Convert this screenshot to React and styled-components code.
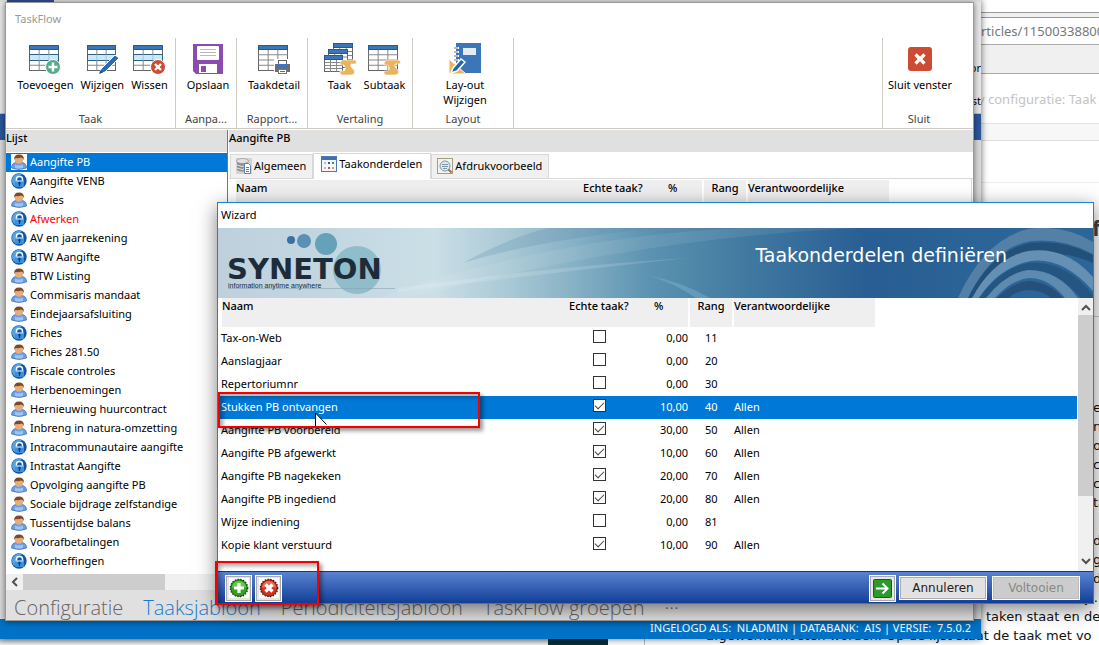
import React from "react";
import styled, { createGlobalStyle, css } from "styled-components";

const ui = `"Noto Sans", "Open Sans", sans-serif`;
const wide = `"DejaVu Sans", Verdana, sans-serif`;

const GlobalStyle = createGlobalStyle`
  * { box-sizing: border-box; }
  body { margin: 0; background: #fff; font: 11px/16px ${ui}; color: #000; }
  button { font: inherit; color: inherit; margin: 0; padding: 0; border: 0; background: none; }
  ul { list-style: none; margin: 0; padding: 0; }
  svg { display: block; flex: none; }
`;

const Desktop = styled.div`
  position: relative;
  height: 100vh;
  min-height: 640px;
  overflow: hidden;
  background: #fff;
`;

/* ---------- browser and document behind the windows ---------- */

const Browser = styled.div`
  position: absolute;
  inset: 0 0 0 auto;
  width: 118px;
  display: flex;
  flex-direction: column;
  overflow: hidden;
  white-space: nowrap;
  font-size: 13px;
  color: #777;
`;
const BrowserStrip = styled.div`
  flex: none;
  height: ${(p) => p.$h}px;
  line-height: ${(p) => p.$h}px;
  background: ${(p) => p.$bg || "#fff"};
  color: ${(p) => p.$color || "#777"};
  border-bottom: 1px solid ${(p) => p.$line || "#e3e3e3"};
  text-indent: ${(p) => p.$indent || 0}px;
`;
const Heading = styled.div`
  font: bold 22px/28px ${ui};
  color: #444;
  padding: 30px 0 0 111px;
  height: 134px;
  border-bottom: 1px solid #ccc;
`;

const Document = styled.div`
  position: absolute;
  right: 0;
  bottom: 0;
  left: 644px;
  border-left: 1px solid #bbb;
  font: 13px/19px ${wide};
  color: #111;
  white-space: nowrap;
  overflow: hidden;
`;
const DocLine = styled.div`
  height: 19px;
  padding-left: ${(p) => p.$indent}px;
`;
const DarkBlock = styled.div`
  position: absolute;
  left: 548px;
  bottom: 0;
  width: 60px;
  height: 6px;
  background: #04303a;
`;
const GreyStrip = styled.div`
  position: absolute;
  left: 0;
  bottom: 0;
  width: 548px;
  height: 6px;
  background: linear-gradient(#bdbdbd, #f2f2f2);
`;

/* ---------- the host application ---------- */

const Shell = styled.div`
  position: absolute;
  inset: 0 118px 6px 0;
  display: flex;
  flex-direction: column;
  background: #dcdcdc;
  box-shadow: 0 0 7px rgba(0, 0, 0, 0.6);
  overflow: hidden;
  clip-path: inset(0 -9px -6px 0);
`;
const ShellTab = styled.div`
  width: 47px;
  height: 2px;
  margin-left: 7px;
  background: #2b4f8f;
`;
const ShellTop = styled.div`
  height: 112px;
  background: #e6e6e6;
  border-bottom: 1px solid #bbb;
  text-align: right;
  line-height: 33px;
  padding-top: 49px;
`;
const ShellBand = styled.div`
  height: 26px;
  background: #2a5699;
`;
const ShellFill = styled.div`
  flex: 1;
  background: #d8d8d8;
`;
const StatusBar = styled.footer`
  height: 20px;
  flex: none;
  background: #0072c6;
  color: #fff;
  text-align: right;
  padding-right: 10px;
  line-height: 18px;
  white-space: pre;
`;

/* ---------- main window ---------- */

const MainWindow = styled.section`
  position: absolute;
  inset: 2px 125px 24px 5px;
  display: flex;
  flex-direction: column;
  background: #fff;
  border: 1px solid #9a9a9a;
  box-shadow: 0 1px 6px rgba(0, 0, 0, 0.5);
  overflow: hidden;
`;
const TitleBar = styled.header`
  flex: none;
  height: 35px;
  line-height: 32px;
  padding-left: 9px;
  color: #999;
`;
const Ribbon = styled.nav`
  flex: none;
  display: flex;
  height: 91px;
  border-bottom: 1px solid #cfcbc4;
  margin-bottom: 1px;
`;
const Group = styled.div`
  flex: none;
  width: ${(p) => p.$w}px;
  display: flex;
  flex-direction: column;
  justify-content: space-between;
  border-right: 1px solid #cfcbc4;
  ${(p) =>
    p.$last &&
    css`
      margin-left: auto;
      padding-right: 18px;
      border-right: 0;
      border-left: 1px solid #cfcbc4;
    `}
`;
const GroupItems = styled.div`
  display: flex;
  justify-content: center;
  gap: ${(p) => p.$gap || 7}px;
  padding: 5px 0 0 ${(p) => p.$shift || 0}px;
`;
const GroupLabel = styled.div`
  text-align: center;
  color: #444;
  padding-bottom: 1px;
`;
const ToolButton = styled.button`
  display: flex;
  flex-direction: column;
  align-items: center;
  gap: 2px;
  line-height: 15px;
  white-space: pre;
`;
const Body = styled.div`
  flex: 1;
  display: flex;
  min-height: 0;
`;
const Side = styled.aside`
  width: 222px;
  flex: none;
  display: flex;
  flex-direction: column;
  border-right: 1px solid #777;
`;
const PaneTitle = styled.h2`
  flex: none;
  margin: 0;
  height: 22px;
  line-height: 16px;
  font-size: 11px;
  font-weight: 500;
  background: #e0e0e0;
`;
const TaskList = styled.ul`
  flex: 1;
  padding-top: 1px;
  min-height: 0;
  overflow: hidden;
`;
const TaskItem = styled.li`
  display: flex;
  align-items: center;
  gap: 3px;
  height: 19px;
  padding: 0 0 2px 5px;
  white-space: nowrap;
  color: ${(p) => (p.$selected ? "#fff" : p.$alert ? "#f00" : "#000")};
  background: ${(p) => (p.$selected ? "#0078d7" : "transparent")};
`;
const HScroll = styled.div`
  flex: none;
  display: flex;
  align-items: center;
  height: 16px;
  background: #f0f0f0;
`;
const HThumb = styled.div`
  width: 142px;
  height: 16px;
  margin-left: 1px;
  background: #cdcdcd;
`;
const Main = styled.main`
  flex: 1;
  min-width: 0;
  display: flex;
  flex-direction: column;
  border-left: 1px solid #fff;
`;
const Tabs = styled.div`
  flex: none;
  display: flex;
  align-items: flex-end;
  height: 27px;
  padding-left: 1px;
  border-bottom: 1px solid #d9d9d9;
`;
const Tab = styled.button`
  display: flex;
  align-items: center;
  gap: 2px;
  height: ${(p) => (p.$active ? 26 : 24)}px;
  padding: ${(p) => (p.$active ? "0 8px 6px 7px" : "0 6px 2px 5px")};
  background: ${(p) => (p.$active ? "#fff" : "#f0f0f0")};
  border: 1px solid #d9d9d9;
  border-bottom: 0;
  ${(p) => p.$active && css`margin-bottom: -1px;`}
`;
const TabPage = styled.div`
  flex: 1;
  padding: 1px 0 0 3px;
  margin-right: 1px;
  border-right: 1px solid #d9d9d9;
`;
const BottomTabs = styled.div`
  flex: none;
  display: flex;
  align-items: center;
  gap: 20px;
  height: 30px;
  padding: 5px 0 0 8px;
  background: #e0e0e0;
`;
const BottomTab = styled.button`
  font-family: "Open Sans", ${ui};
  font-size: 20px;
  line-height: 26px;
  font-weight: 300;
  white-space: nowrap;
  color: ${(p) => (p.$active ? "#1979ca" : "#666")};
`;

/* ---------- parts table ---------- */

const PartsTable = styled.table`
  width: 100%;
  table-layout: fixed;
  border-collapse: separate;
  border-spacing: 0;
  th, td { padding: 0; font-weight: inherit; text-align: left; white-space: nowrap; }
  tbody td { padding-bottom: 2px; }
`;
const Col = styled.col`
  width: ${(p) => (p.$w ? p.$w + "px" : "auto")};
`;
const HeadCell = styled.th`
  height: 29px;
  vertical-align: top;
  font-weight: 500 !important;
  background: #efefef;
  ${(p) => p.$first && css`border-left: 4px solid #fff;`}
  ${(p) => p.$check && css`padding-left: 1px !important;`}
  ${(p) => p.$pct && css`padding-left: 23px !important;`}
  ${(p) => p.$boxed && css`border: solid #fff; border-width: 0 2px; text-align: center !important;`}
  ${(p) => p.$blank && css`background: transparent;`}
`;
const Row = styled.tr`
  height: 23px;
  color: ${(p) => (p.$selected ? "#fff" : "#000")};
  background: ${(p) => (p.$selected ? "#0078d7" : "transparent")};
`;
const NameCell = styled.td`
  padding-left: 3px !important;
`;
const CheckCell = styled.td`
  text-align: center !important;
  padding-bottom: 4px !important;
`;
const NumCell = styled.td`
  text-align: right !important;
`;
const RankCell = styled.td`
  padding-left: 17px !important;
`;
const Check = styled.input`
  appearance: none;
  display: block;
  width: 13px;
  height: 13px;
  margin: 0 auto;
  background: #fff;
  border: 1px solid #333;
  &:checked::after {
    content: "";
    display: block;
    width: 8px;
    height: 4px;
    margin: 2px 0 0 1px;
    border: solid #444;
    border-width: 0 0 1px 1px;
    transform: rotate(-45deg);
  }
`;

/* ---------- wizard ---------- */

const Wizard = styled.section`
  position: absolute;
  inset: 202px 5px 41px 217px;
  display: flex;
  flex-direction: column;
  background: #fff;
  border: 1px solid #1883d7;
  box-shadow: 0 5px 18px rgba(0, 0, 0, 0.5);
`;
const WizardTitle = styled.header`
  flex: none;
  height: 25px;
  line-height: 23px;
  padding-left: 3px;
`;
const Banner = styled.div`
  flex: none;
  position: relative;
  height: 70px;
  overflow: hidden;
  display: flex;
  justify-content: space-between;
  background: linear-gradient(90deg, #bed0dc 0, #c3d8e1 130px, #cbdfe7 215px, #a9c9d5 290px, #8ab3c7 350px, #5c93b1 430px, #4079a0 530px, #285e93 650px, #2d6a9b 100%);
`;
const BannerArt = styled.svg`
  position: absolute;
  inset: 0;
  width: 100%;
  height: 70px;
`;
const Logo = styled.div`
  position: relative;
  padding: 27px 0 0 9px;
  color: #1d2c38;
`;
const LogoName = styled.div`
  font: bold 29px/28px ${wide};
`;
const LogoLine = styled.div`
  font: 7px/5px "Liberation Sans", sans-serif;
  padding-left: 1px;
`;
const BannerTitle = styled.h1`
  position: relative;
  margin: 0;
  padding: 14px 86px 0 0;
  font: 19px/26px ${wide};
  color: #fff;
`;
const WizardBody = styled.div`
  flex: 1;
  min-height: 0;
  display: flex;
  gap: 1px;
`;
const TableArea = styled.div`
  flex: 1;
  min-width: 0;
  overflow: hidden;
`;
const VScroll = styled.div`
  flex: none;
  width: 15px;
  display: flex;
  flex-direction: column;
  align-items: center;
  background: #f0f0f0;
  padding: 4px 0;
`;
const VThumb = styled.div`
  width: 15px;
  height: 181px;
  margin: 4px 0 auto;
  background: #cdcdcd;
`;
const WizardFooter = styled.footer`
  flex: none;
  height: 32px;
  display: flex;
  align-items: center;
  gap: 3px;
  padding: 1px 13px 0 7px;
  border-top: 1px solid #0b3a93;
  background: linear-gradient(#5883d1, #123e97);
`;
const IconButton = styled.button`
  width: 27px;
  height: 27px;
  display: grid;
  place-items: center;
  background: #e6e6e6;
  border: 1px solid #fff;
  box-shadow: inset 0 0 0 1px #aaa;
  ${(p) => p.$push && css`margin-left: auto;`}
`;
const TextButton = styled.button`
  width: 88px;
  height: 24px;
  font: 12px/20px ${wide};
  background: ${(p) => (p.disabled ? "#ccc" : "#e1e1e1")};
  color: ${(p) => (p.disabled ? "#888" : "#222")};
  border: 1px solid #fff;
  box-shadow: inset 0 0 0 1px ${(p) => (p.disabled ? "#bbb" : "#adadad")};
  & + & { margin-left: 2px; }
`;

/* ---------- highlight frames and mouse pointer ---------- */

const Marker = styled.div`
  position: absolute;
  left: ${(p) => p.$x}px;
  top: ${(p) => p.$y}px;
  width: ${(p) => p.$w}px;
  height: ${(p) => p.$h}px;
  border: 2px solid #f40000;
  box-shadow: 3px 3px 4px rgba(0, 0, 0, 0.4), inset 3px 3px 4px rgba(0, 0, 0, 0.35);
  pointer-events: none;
`;
const Pointer = styled.svg`
  position: absolute;
  left: 314px;
  top: 412px;
`;

/* ---------- icons ---------- */

function Grid({ x = 1, y = 2, w = 30, h = 26, stripe }) {
  const c = w / 3;
  return (
    <g>
      <rect x={x} y={y} width={w} height={h} fill="#fff" stroke="#666" />
      {[1, 2, 3].map((i) => (
        <path key={i} d={`M${x} ${y + 4 + ((h - 4) / 4) * i}h${w}`} stroke="#888" />
      ))}
      <path d={`M${x + c} ${y + 4}v${h - 4}M${x + 2 * c} ${y + 4}v${h - 4}`} stroke="#888" />
      <rect x={x} y={y} width={w} height="4" fill="#3a76b8" stroke="#245a94" />
      {stripe && (
        <g>
          <rect x={x} y={y + 9} width={w} height="6" fill="#c9e8fa" stroke="#34607e" />
          <path d={`M${x + c} ${y + 9}v6M${x + 2 * c} ${y + 9}v6`} stroke="#9fc9e0" />
        </g>
      )}
    </g>
  );
}
const Scroll = () => (
  <path d="M17 22q0-5 4-5h11q2 1 1 4h-5q-1 2 1 4 4 3 2 6-1 1-4 1h-8q-3-1-2-4h4q3-2 0-6z" fill="#eab45c" stroke="#fff" strokeWidth=".6" />
);
function RibbonIcon({ kind }) {
  return (
    <svg width="34" height="32" viewBox="0 0 34 32">
      {kind === "add" && (
        <g><Grid x={1.5} y={2.5} w={29} h={25} stripe /><circle cx="25" cy="24" r="7.5" fill="#54ad87" stroke="#fff" /><path d="M25 19.500v9M20.500 24h9" stroke="#fff" strokeWidth="2.500" /></g>
      )}
      {kind === "edit" && (
        <g><Grid x={2.500} y={2.500} w={28} h={25} stripe /><path d="M14 31l2-5L30 12l4 3-14 14z" fill="#2a6cb3" stroke="#fff" /><path d="M14 31l1.500-4 2.500 2.500z" fill="#1d4f8c" /></g>
      )}
      {kind === "delete" && (
        <g><Grid x={1.500} y={2.500} w={29} h={25} stripe /><circle cx="26" cy="24" r="7.500" fill="#cd4a33" stroke="#fff" /><path d="M23 21l6 6M29 21l-6 6" stroke="#fff" strokeWidth="2.400" /></g>
      )}
      {kind === "save" && (
        <g><path d="M2 1h30v30H5l-3-3z" fill="#8b4caf" /><rect x="6" y="3" width="22" height="14" rx="1" fill="#fff" /><path d="M9 6.500h16M9 9.500h16M9 12.500h16" stroke="#bbb" /><rect x="8" y="21" width="18" height="9" fill="#fff" /><rect x="10" y="23" width="5" height="6" fill="#8b4caf" /></g>
      )}
      {kind === "print" && (
        <g><Grid x={1.500} y={2.500} w={29} h={25} /><rect x="17" y="16" width="17" height="16" fill="#fff" /><rect x="21.500" y="17.500" width="8" height="5" fill="#fff" stroke="#666" /><path d="M18 21h15v8h-15z" fill="#6d6d6d" /><rect x="20" y="21" width="11" height="3" fill="#3a76b8" /><rect x="21.500" y="26.500" width="8" height="4" fill="#fff" stroke="#777" /><path d="M23 28.500h5" stroke="#3a76b8" /></g>
      )}
      {kind === "tasks" && (
        <g><Grid x={10.500} y={0.500} w={19} h={20} /><Grid x={5.500} y={6.500} w={19} h={18} /><Grid x={1.500} y={12.500} w={18} h={16} /><Scroll /></g>
      )}
      {kind === "sub" && <g><Grid x={1.500} y={2.500} w={29} h={25} /><Scroll /></g>}
      {kind === "layout" && (
        <g><rect x="8" y="0" width="25" height="30" fill="#3a76b8" /><rect x="15" y="5" width="13" height="7" fill="#e4ecf3" /><path d="M9 4v14" stroke="#fff" strokeWidth="4" strokeDasharray="2 2" /><path d="M6 5h4M6 9h4M6 13h4M6 17h4" stroke="#777" /><path d="M1 16v15h17z" fill="#eab45c" stroke="#fff" /><path d="M3 30l2-5L13 16l4 3-8 9z" fill="#2464ab" stroke="#fff" strokeWidth="1.500" /></g>
      )}
      {kind === "close" && (
        <g><rect x="5" y="4" width="24" height="24" rx="3" fill="#cd4a33" /><path d="M12.500 11.500l9 9M21.500 11.500l-9 9" stroke="#fff" strokeWidth="3.200" /></g>
      )}
    </svg>
  );
}

const PersonIcon = ({ framed }) => (
  <svg width="16" height="16" viewBox="0 0 16 16">
    {framed && <rect width="16" height="16" fill="#fff" />}
    <path d="M.5 14q0-5 4.500-5.500h6q4.500.5 4.500 5.500-7.500 3-15 0z" fill="#6c9fe0" stroke="#3f6cae" strokeWidth=".7" />
    <path d="M4 10.500q4 2 8 0v3.500q-4 1-8 0z" fill="#9cc4f4" />
    <ellipse cx="8" cy="5.500" rx="4.300" ry="4.300" fill="#e5ac7c" />
    <path d="M3.200 6Q2.500.500 8 .500T12.800 6Q12 3.500 10.500 3.500q-3 1-5.500.5-1 0-1.800 2z" fill="#7d4a28" />
  </svg>
);
const LockIcon = () => (
  <svg width="16" height="16" viewBox="0 0 16 16">
    <circle cx="8" cy="8" r="7.700" fill="#0f56a8" />
    <path d="M1 9Q.500 3 6 1q4-1 5 1-5 1-6 5l-1 6Q2 12 1 9z" fill="#55a3e2" />
    <path d="M5.500 8V6q0-2.500 3-2.500t3 2.500v2" fill="none" stroke="#f2f9ff" strokeWidth="1.500" />
    <rect x="4" y="7.500" width="9" height="6.500" rx="1" fill="#3f8fdb" />
    <path d="M4.500 8h8" stroke="#cfe6fa" />
    <circle cx="8.500" cy="10" r="1.200" fill="#083a78" />
    <path d="M8.500 10v3" stroke="#083a78" strokeWidth="1.200" />
  </svg>
);
function TabIcon({ kind }) {
  return (
    <svg width="16" height="16" viewBox="0 0 16 16">
      {kind === "data" && (
        <g><rect width="16" height="16" fill="#d4d4d4" /><path d="M1 3v9q5 3 10 0V3z" fill="#8f8f8f" /><ellipse cx="6.500" cy="3" rx="6" ry="2.500" fill="#e2e2e2" stroke="#888" strokeWidth=".6" /><path d="M1 7q5 3 10 0M1 10q5 3 10 0" stroke="#e6e6e6" fill="none" /><path d="M8.500 5.500h4l2 2v8h-6z" fill="#fff" stroke="#6580ad" /><path d="M10 9.500h3M10 11.500h3M10 13.500h3" stroke="#5578b5" /></g>
      )}
      {kind === "grid" && (
        <g><rect x=".5" y=".5" width="15" height="15" fill="#f2f7fd" stroke="#4d78b5" /><path d="M1 1h14v3H1z" fill="#3d6fb3" /><path d="M3 7h2M3 12h2" stroke="#b4c0dc" strokeWidth="2" /><path d="M7 7h2" stroke="#3553c0" strokeWidth="2" /><path d="M11 7h2" stroke="#36a13a" strokeWidth="2" /><path d="M7 12h2" stroke="#d44" strokeWidth="2" /><path d="M11 12h2" stroke="#e3a12c" strokeWidth="2" /></g>
      )}
      {kind === "preview" && (
        <g><rect x=".5" y=".5" width="15" height="15" fill="#f4f3ea" stroke="#a39c82" /><circle cx="8" cy="8" r="5" fill="#dceaf4" stroke="#7d95a8" /><path d="M5 6.500h6M5 8.500h6M6 10.500h4" stroke="#7d95a8" /><path d="M11.500 11.500l3 3" stroke="#a2663c" strokeWidth="2" /></g>
      )}
    </svg>
  );
}
const Chevron = ({ d, w = 10, h = 6 }) => (
  <svg width={w} height={h} viewBox={`0 0 ${w} ${h}`}><path d={d} fill="none" stroke="#505050" strokeWidth="2" /></svg>
);
const RoundIcon = ({ fill, edge, light, children }) => (
  <svg width="20" height="20" viewBox="0 0 20 20">
    <rect width="20" height="20" fill="#fff" />
    <circle cx="10" cy="10" r="8.700" fill="none" stroke="#111" strokeWidth="1.200" strokeDasharray="1.400 1.400" />
    <circle cx="10" cy="10" r="8.200" fill={fill} stroke={edge} />
    <path d="M3 10a7 7 0 0 1 14 0q-7-3-14 0z" fill={light} />
    {children}
  </svg>
);

/* ---------- data ---------- */

const tasks = [
  ["Aangifte PB", "p"], ["Aangifte VENB", "l"], ["Advies", "p"], ["Afwerken", "l"],
  ["AV en jaarrekening", "l"], ["BTW Aangifte", "l"], ["BTW Listing", "p"],
  ["Commisaris mandaat", "p"], ["Eindejaarsafsluiting", "p"], ["Fiches", "l"],
  ["Fiches 281.50", "p"], ["Fiscale controles", "l"], ["Herbenoemingen", "p"],
  ["Hernieuwing huurcontract", "p"], ["Inbreng in natura-omzetting", "p"],
  ["Intracommunautaire aangifte", "l"], ["Intrastat Aangifte", "l"],
  ["Opvolging aangifte PB", "p"], ["Sociale bijdrage zelfstandige", "p"],
  ["Tussentijdse balans", "p"], ["Voorafbetalingen", "p"], ["Voorheffingen", "l"],
];
const parts = [
  ["Tax-on-Web", false, "0,00", 11, ""],
  ["Aanslagjaar", false, "0,00", 20, ""],
  ["Repertoriumnr", false, "0,00", 30, ""],
  ["Stukken PB ontvangen", true, "10,00", 40, "Allen"],
  ["Aangifte PB voorbereid", true, "30,00", 50, "Allen"],
  ["Aangifte PB afgewerkt", true, "10,00", 60, "Allen"],
  ["Aangifte PB nagekeken", true, "20,00", 70, "Allen"],
  ["Aangifte PB ingediend", true, "20,00", 80, "Allen"],
  ["Wijze indiening", false, "0,00", 81, ""],
  ["Kopie klant verstuurd", true, "10,00", 90, "Allen"],
];
const docFragments = ["e", "n", "o", "c", "c", "ta", "", "d", "g", "d"];

function Parts({ rows = [] }) {
  return (
    <PartsTable>
      <colgroup>
        <Col $w={350} /><Col $w={63} /><Col $w={57} /><Col $w={46} /><Col $w={141} /><Col />
      </colgroup>
      <thead>
        <tr>
          <HeadCell $first>Naam</HeadCell>
          <HeadCell $check>Echte taak?</HeadCell>
          <HeadCell $pct>%</HeadCell>
          <HeadCell $boxed>Rang</HeadCell>
          <HeadCell>Verantwoordelijke</HeadCell>
          <HeadCell as="td" $blank />
        </tr>
      </thead>
      <tbody>
        {rows.map(([name, real, pct, rank, who]) => (
          <Row key={name} $selected={rank === 40}>
            <NameCell>{name}</NameCell>
            <CheckCell><Check type="checkbox" defaultChecked={real} aria-label={name} /></CheckCell>
            <NumCell>{pct}</NumCell>
            <RankCell>{rank}</RankCell>
            <td>{who}</td>
            <td />
          </Row>
        ))}
      </tbody>
    </PartsTable>
  );
}

const Tool = ({ kind, children }) => (
  <ToolButton type="button"><RibbonIcon kind={kind} /><span>{children}</span></ToolButton>
);

export default function App() {
  return (
    <Desktop>
      <GlobalStyle />
      <Browser>
        <BrowserStrip $h={13} $line="#999" />
        <BrowserStrip $h={5} $bg="#f0f0f0" $line="#999" />
        <BrowserStrip $h={27} $line="#aaa">rticles/11500338800</BrowserStrip>
        <BrowserStrip $h={29} $bg="#f0f0f0" $line="#aaa" />
        <BrowserStrip $h={50} $color="#c4c4c4" $indent={-3}>y configuratie: Taak</BrowserStrip>
        <BrowserStrip $h={17} $bg="#f7f7f7" $line="#ddd" />
        <BrowserStrip $h={42} $line="#eee" />
        <Heading>fi</Heading>
      </Browser>
      <Document>
        {docFragments.map((t, i) => <DocLine key={i} $indent={448}>{t}</DocLine>)}
        <DocLine $indent={440}>j).</DocLine>
        <DocLine $indent={341}>taken staat en de</DocLine>
        <DocLine $indent={61}>afgewerkt moeten worden. Op de lijst staat de taak met vo</DocLine>
      </Document>
      <GreyStrip />
      <DarkBlock />
      <Shell>
        <ShellTab />
        <ShellTop><div>or</div><div>st</div></ShellTop>
        <ShellBand />
        <ShellFill />
        <StatusBar>{"INGELOGD ALS:  NLADMIN | DATABANK:  AIS | VERSIE:  7.5.0.2"}</StatusBar>
      </Shell>

      <MainWindow>
        <TitleBar>TaskFlow</TitleBar>
        <Ribbon>
          <Group $w={170}>
            <GroupItems $shift={4}>
              <Tool kind="add">Toevoegen</Tool><Tool kind="edit">Wijzigen</Tool><Tool kind="delete">Wissen</Tool>
            </GroupItems>
            <GroupLabel>Taak</GroupLabel>
          </Group>
          <Group $w={61}>
            <GroupItems $shift={4}><Tool kind="save">Opslaan</Tool></GroupItems>
            <GroupLabel>Aanpa...</GroupLabel>
          </Group>
          <Group $w={71}>
            <GroupItems $shift={4}><Tool kind="print">Taakdetail</Tool></GroupItems>
            <GroupLabel>Rapport...</GroupLabel>
          </Group>
          <Group $w={105}>
            <GroupItems $shift={8}><Tool kind="tasks">Taak</Tool><Tool kind="sub">Subtaak</Tool></GroupItems>
            <GroupLabel>Vertaling</GroupLabel>
          </Group>
          <Group $w={101}>
            <GroupItems $shift={4}><Tool kind="layout">{"Lay-out\nWijzigen"}</Tool></GroupItems>
            <GroupLabel>Layout</GroupLabel>
          </Group>
          <Group $w={91} $last>
            <GroupItems $shift={2}><Tool kind="close">Sluit venster</Tool></GroupItems>
            <GroupLabel>Sluit</GroupLabel>
          </Group>
        </Ribbon>
        <Body>
          <Side>
            <PaneTitle>Lijst</PaneTitle>
            <TaskList>
              {tasks.map(([name, kind], i) => (
                <TaskItem key={name} $selected={i === 0} $alert={name === "Afwerken"}>
                  {kind === "p" ? <PersonIcon framed={i === 0} /> : <LockIcon />}{name}
                </TaskItem>
              ))}
            </TaskList>
            <HScroll>
              <Chevron d="M11 1L7 5l4 4" w={16} h={10} />
              <HThumb />
            </HScroll>
          </Side>
          <Main>
            <PaneTitle>Aangifte PB</PaneTitle>
            <Tabs>
              <Tab type="button"><TabIcon kind="data" />Algemeen</Tab>
              <Tab type="button" $active><TabIcon kind="grid" />Taakonderdelen</Tab>
              <Tab type="button"><TabIcon kind="preview" />Afdrukvoorbeeld</Tab>
            </Tabs>
            <TabPage><Parts /></TabPage>
          </Main>
        </Body>
        <BottomTabs>
          <BottomTab type="button">Configuratie</BottomTab>
          <BottomTab type="button" $active>Taaksjabloon</BottomTab>
          <BottomTab type="button">Periodiciteitsjabloon</BottomTab>
          <BottomTab type="button">TaskFlow groepen</BottomTab>
          <BottomTab type="button">···</BottomTab>
        </BottomTabs>
      </MainWindow>

      <Wizard>
        <WizardTitle>Wizard</WizardTitle>
        <Banner>
          <BannerArt viewBox="0 0 875 70" preserveAspectRatio="xMinYMid slice">
            <path d="M160 70Q330 10 520 0h120Q420 10 190 70z" fill="#fff" opacity=".08" />
            <path d="M180 60Q340 38 470 30 340 44 180 64z" fill="#fff" opacity=".14" />
            <path d="M245 35Q290 10 330 0h110Q320 12 245 35z" fill="#4f86a8" opacity=".22" />
            <path d="M432 48q30 5 60 22h-14q-20-14-46-22z" fill="#7db4cc" opacity=".45" />
            <path d="M742 70Q770 6 826 0h49v70z" fill="#2c6699" />
            <path d="M740 70Q766 12 810 1q36-5 65 13v12q-30-16-62-13-38 6-63 57z" fill="#5580a6" />
            <path d="M750 70q24-48 62-55 34-4 63 12v8q-30-13-60-9-36 8-57 44z" fill="#225079" />
            <path d="M754 70q22-40 56-47 38-5 65 26v14q-30-34-62-30-32 6-52 37z" fill="#6690b3" />
            <path d="M761 70q22-30 50-35 36-3 64 32v3h-12q-26-30-52-28-24 4-43 28z" fill="#255581" />
            <path d="M768 70q20-25 42-28 30 0 50 28h-13q-16-20-36-20-18 2-34 20z" fill="#5f8ab0" />
            <path d="M779 70q16-16 32-17 20 1 34 17h-12q-10-8-22-8t-20 8z" fill="#264f7c" />
          </BannerArt>
          <BannerArt viewBox="0 0 875 70" preserveAspectRatio="xMinYMid slice">
            <circle cx="73" cy="12" r="4" fill="#3a71a3" />
            <circle cx="86" cy="13" r="7" fill="#5990b4" />
            <circle cx="108" cy="16" r="11" fill="#65a1b8" />
            <circle cx="139" cy="42" r="24" fill="#8fbdca" />
            <path d="M10 60.500h167" stroke="#8aa4b0" strokeOpacity=".6" />
          </BannerArt>
          <Logo>
            <LogoName>SYNETON</LogoName>
            <LogoLine>information anytime anywhere</LogoLine>
          </Logo>
          <BannerTitle>Taakonderdelen definiëren</BannerTitle>
        </Banner>
        <WizardBody>
          <TableArea><Parts rows={parts} /></TableArea>
          <VScroll>
            <Chevron d="M1 8l4-4 4 4" h={9} />
            <VThumb />
            <Chevron d="M1 1l4 4 4-4" h={9} />
          </VScroll>
        </WizardBody>
        <WizardFooter>
          <IconButton type="button" aria-label="Toevoegen">
            <RoundIcon fill="#2fa51c" edge="#14610f" light="#62c94f"><path d="M10 5v10M5 10h10" stroke="#fff" strokeWidth="3.200" /></RoundIcon>
          </IconButton>
          <IconButton type="button" aria-label="Verwijderen">
            <RoundIcon fill="#d6321a" edge="#7d1208" light="#ee6a52"><path d="M6.500 6.500l7 7M13.500 6.500l-7 7" stroke="#fff" strokeWidth="3.200" /></RoundIcon>
          </IconButton>
          <IconButton type="button" aria-label="Volgende" $push>
            <svg width="19" height="19" viewBox="0 0 19 19">
              <rect x=".5" y=".5" width="18" height="18" rx="1" fill="#2b9a2b" stroke="#146214" />
              <path d="M3 9.500h11M9.500 4.500l5 5-5 5" fill="none" stroke="#fff" strokeWidth="2" />
            </svg>
          </IconButton>
          <TextButton type="button">Annuleren</TextButton>
          <TextButton type="button" disabled>Voltooien</TextButton>
        </WizardFooter>
      </Wizard>

      <Pointer width="14" height="15" viewBox="0 0 14 15">
        <path d="M1.500 1v14h8l3-2.500z" fill="#fff" />
        <path d="M1.500 15V1l11 11.500" fill="none" stroke="#000" />
      </Pointer>
      <Marker $x={218} $y={392} $w={262} $h={36} />
      <Marker $x={215} $y={561} $w={104} $h={44} />
    </Desktop>
  );
}
